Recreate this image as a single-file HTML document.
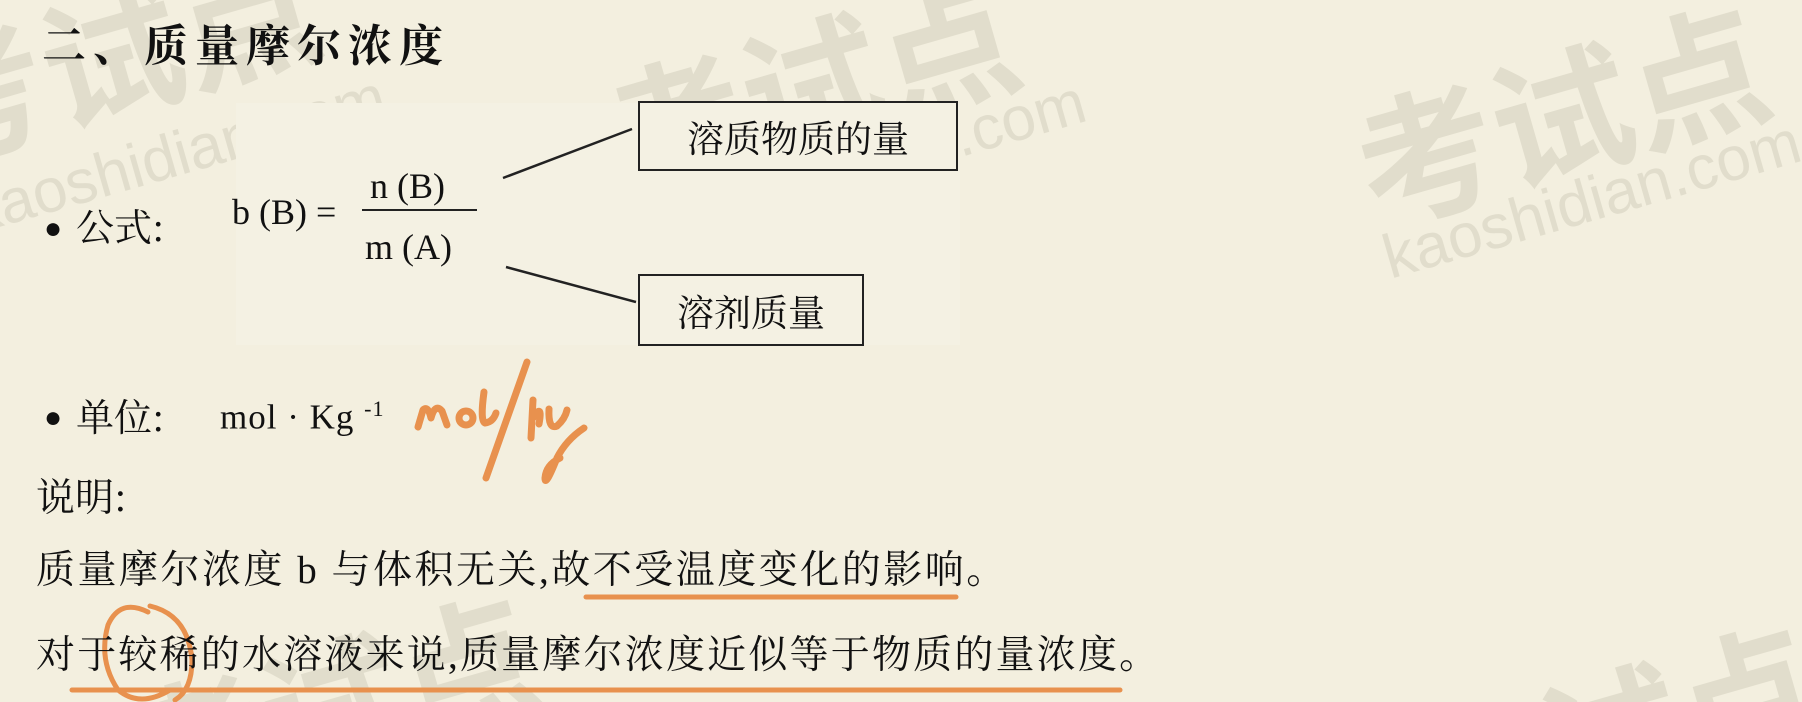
<!DOCTYPE html>
<html><head><meta charset="utf-8"><style>
html,body{margin:0;padding:0;width:1802px;height:702px;overflow:hidden}
body{background:#f3efdf;font-family:"Liberation Serif","Noto Serif CJK SC",serif;color:#111}
#w{position:relative;width:1802px;height:702px;overflow:hidden;background:#f3efdf}
.wm{position:absolute;color:#e1ddcc;font-family:"Liberation Sans","Noto Sans CJK SC",sans-serif;font-weight:bold;transform:rotate(-16deg);transform-origin:left top;white-space:nowrap}
.wk{position:absolute;color:#e1ddcc;font-family:"Liberation Sans",sans-serif;transform:rotate(-16deg);transform-origin:left top;white-space:nowrap}
.a{position:absolute;white-space:nowrap;line-height:1}
.box{position:absolute;border:2px solid #222;box-sizing:border-box;font-size:37px;display:flex;align-items:center;justify-content:center;font-family:"Noto Serif CJK SC",serif}
</style></head><body><div id="w">
<div class="wm" style="left:-120px;top:10px;font-size:140px">考试点</div>
<div class="wk" style="left:-40px;top:180px;font-size:62px">kaoshidian.com</div>
<div class="wm" style="left:580px;top:40px;font-size:140px">考试点</div>
<div class="wk" style="left:660px;top:185px;font-size:62px">kaoshidian.com</div>
<div class="wm" style="left:1330px;top:70px;font-size:140px">考试点</div>
<div class="wk" style="left:1375px;top:225px;font-size:62px">kaoshidian.com</div>
<div class="wm" style="left:100px;top:660px;font-size:140px">考试点</div>
<div class="wm" style="left:1380px;top:690px;font-size:140px">考试点</div>
<div style="position:absolute;left:236px;top:103px;width:724px;height:242px;background:#f4f1e3"></div>

<div class="a" style="left:42px;top:20px;font-size:44px;font-weight:bold;letter-spacing:7px;font-family:'Noto Serif CJK SC',serif">二、质量摩尔浓度</div>

<div class="a" style="left:44px;top:214px;font-size:30px">●</div>
<div class="a" style="left:76px;top:206px;font-size:38px;font-family:'Noto Serif CJK SC',serif">公式:</div>
<div class="a" style="left:232px;top:194px;font-size:36px">b (B) =</div>
<div class="a" style="left:370px;top:168px;font-size:36px">n (B)</div>
<div style="position:absolute;left:362px;top:209px;width:115px;height:2px;background:#222"></div>
<div class="a" style="left:365px;top:229px;font-size:36px">m (A)</div>
<svg style="position:absolute;left:0;top:0" width="1802" height="702">
<line x1="503" y1="178" x2="632" y2="129" stroke="#222" stroke-width="2.5"/>
<line x1="506" y1="267" x2="636" y2="302" stroke="#222" stroke-width="2.5"/>
<g fill="none" stroke="#e8914e" stroke-width="7" stroke-linecap="round" stroke-linejoin="round">
<path d="M418,427 L423,410 Q428,405 431,418 Q435,403 442,411 L447,425"/>
<circle cx="466" cy="418" r="7"/>
<path d="M484,392 Q480,421 485,423 Q493,422 496,413"/>
<path d="M527,362 L486,478"/>
<path d="M533,400 L531,438 M533,418 Q543,402 539,424"/>
<path d="M549,409 Q548,430 557,426 Q565,419 567,410 M584,428 Q566,440 557,458 Q545,488 545,478 Q546,465 560,458"/>
<path d="M586,597 L956,597" stroke-width="5"/>
<path d="M72,690 L1120,690" stroke-width="5"/>
<path d="M148,612 Q120,598 108,625 Q98,660 118,690 Q140,708 170,690" stroke-width="5"/>
<path d="M150,606 Q188,615 192,660 Q192,690 175,700" stroke-width="5"/>
</g>
</svg>
<div class="box" style="left:638px;top:101px;width:320px;height:70px">溶质物质的量</div>
<div class="box" style="left:638px;top:274px;width:226px;height:72px">溶剂质量</div>

<div class="a" style="left:44px;top:403px;font-size:30px">●</div>
<div class="a" style="left:76px;top:396px;font-size:38px;font-family:'Noto Serif CJK SC',serif">单位:</div>
<div class="a" style="left:220px;top:398px;font-size:35px;letter-spacing:1px">mol · Kg <sup style="font-size:22px">-1</sup></div>

<div class="a" style="left:36px;top:476px;font-size:39px;font-family:'Noto Serif CJK SC',serif">说明:</div>
<div class="a" style="left:36px;top:551px;font-size:39px;font-family:'Liberation Serif','Noto Serif CJK SC',serif;letter-spacing:2.5px">质量摩尔浓度 b 与体积无关,故不受温度变化的影响。</div>
<div class="a" style="left:36px;top:636px;font-size:39px;font-family:'Liberation Serif','Noto Serif CJK SC',serif;letter-spacing:2.2px">对于较稀的水溶液来说,质量摩尔浓度近似等于物质的量浓度。</div>
</div></body></html>
